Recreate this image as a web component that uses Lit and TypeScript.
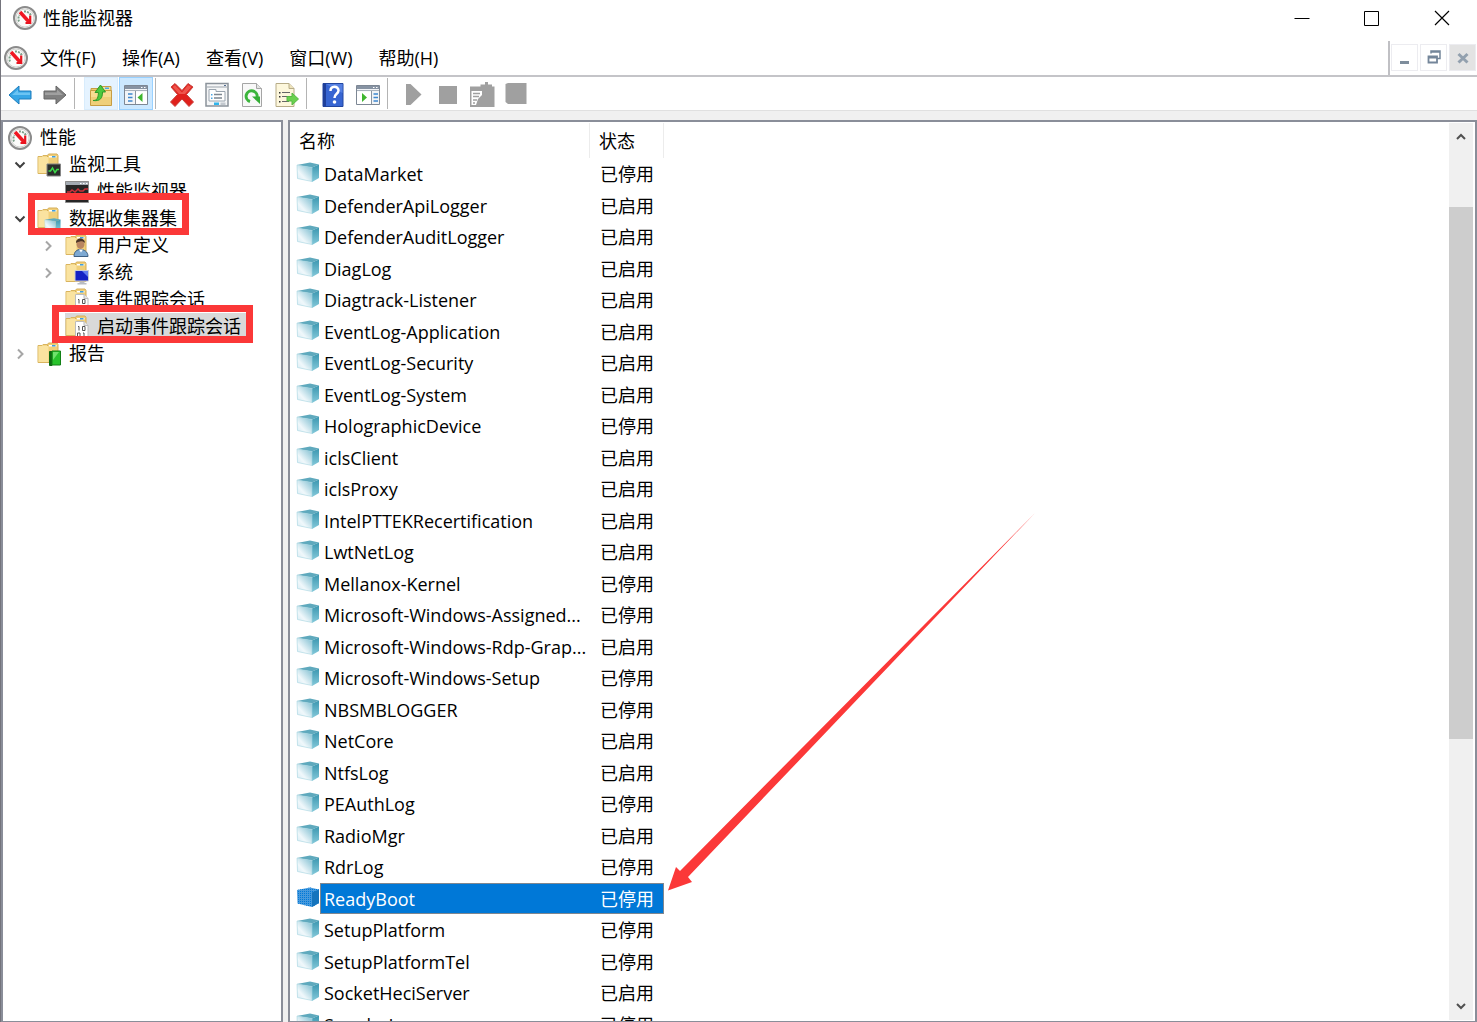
import { LitElement, html, svg, css } from "lit";
import { customElement, property, state } from "lit/decorators.js";
import { classMap } from "lit/directives/class-map.js";

const folder = svg`
  <path d="M1 3.500h4l1-1h4l1 1v17H1z" fill="#f3d889" stroke="#d9b45f"/>
  <path d="M10.500 2.500l1-1.500h8.500l1 1.500v18h-10.500z" fill="#f0cf79" stroke="#d5ae58"/>
  <path d="M1.500 4h10v16h-10z" fill="#fae3a0"/>
  <path d="M12 3h7.500v1.500H12z" fill="#fff"/>
  <path d="M15 3h3.500v1.500H15z" fill="#3f9fe0"/>`;

const gauge = svg`
  <circle cx="12" cy="12" r="11" fill="#f4f4f2" stroke="#8b8b8b" stroke-width="2"/>
  <circle cx="12" cy="12" r="9" fill="#fbfbfa" stroke="#d2d2d0"/>
  <path d="M6 15.500a7 7 0 0 1 .5-6.500M11 5.500a7 7 0 0 1 7 4" fill="none" stroke="#7da08a" stroke-width="2" stroke-dasharray="2 1"/>
  <path d="M7 6l9.500 10.500" stroke="#f01822" stroke-width="3.500"/>
  <path d="M17.200 9.500v7.500H12.500" fill="none" stroke="#e8141f" stroke-width="2.200"/>`;

const cubeShape = svg`
  <path d="M1 3L14 .500 23 2.500 16 5.500z" fill="#5fa9bd"/>
  <path d="M16 5.500l7-3V16l-7 4z" fill="url(#side)"/>
  <path d="M1 3l15 2.500v14L1.500 16.500z" fill="url(#face)" stroke="#a3d3df" stroke-width=".600"/>`;

const cubeDefs = svg`<defs>
  <linearGradient id="face" x1="0" y1="1" x2="1" y2="0"><stop offset="0" stop-color="#d5ebf4"/><stop offset=".35" stop-color="#f0f8fb"/><stop offset="1" stop-color="#7dbdd0"/></linearGradient>
  <linearGradient id="side" x1="0" y1="0" x2="0" y2="1"><stop offset="0" stop-color="#3c97b0"/><stop offset="1" stop-color="#84c9da"/></linearGradient>
</defs>`;

const binaryPage = svg`
  <path d="M10.500 6.500h8.500l4 4v13H10.500z" fill="#fff" stroke="#bcbcbc"/>
  <path d="M19 6.500v4h4" fill="#e6e6e6" stroke="#bcbcbc"/>
  <path d="M13 11.500h1v4M17.500 11.500h2.500v4h-2.500zM12.500 18h2.500v4h-2.500zM18 18h1v4.500" fill="none" stroke="#555"/>`;

const windowFrame = svg`
  <path d="M.500 2.500h23v19H.500z" fill="#f2f4f7" stroke="#7d8794"/>
  <path d="M1 3h22v3H1z" fill="#8793a3"/>
  <path d="M1 7.500h22" stroke="#a9b2bd"/>
  <path d="M17 4h1.500v1H17zM20 4h1.500v1H20z" fill="#fff"/>`;

const ICONS: Record<string, unknown> = {
  gauge,
  cube: svg`${cubeDefs}${cubeShape}`,
  cubeSelected: svg`
    <defs><pattern id="dots" width="2" height="2" patternUnits="userSpaceOnUse"><path d="M0 0h1v1H0z" fill="#0078d7"/></pattern></defs>
    <path d="M1 3L14 .500 23 2.500V16l-7 4L1.500 16.500z" fill="#4699dc"/>
    <path d="M1 3L14 .500 23 2.500V16l-7 4L1.500 16.500z" fill="url(#dots)"/>
    <path d="M16 5.500l7-3V16l-7 4z" fill="#1474bd"/>`,
  monitorTools: svg`${folder}
    <path d="M10 11h13.500v12H10z" fill="#2b2f2c" stroke="#858585"/>
    <path d="M11.500 18h2l2-3 2.500 4.500 2-3h2" fill="none" stroke="#3cdc4a" stroke-width="1.500"/>`,
  monitor: svg`
    <path d="M.500 1.500h23v21H.500z" fill="#262626" stroke="#8e8e8e"/>
    <path d="M1 2h22v3H1z" fill="#a3aab2"/>
    <path d="M15 3h1.500v1H15zM18 3h1.500v1H18zM21 3h1.500v1H21z" fill="#fff"/>
    <path d="M2 12h3l2-2 3 2 3-3 2 2h3l2-2h3" fill="none" stroke="#d0303a" stroke-width="1.500"/>`,
  collector: svg`${folder}${cubeDefs}<g transform="translate(7 11) scale(.72 .62)">${cubeShape}</g>`,
  user: svg`${folder}
    <path d="M9 22.500c0-5 3-7 6.500-7s7.500 2 7.500 7z" fill="#7ea9d2" stroke="#3d5f83"/>
    <path d="M14 15.500l2 3 2-3z" fill="#fff"/>
    <ellipse cx="15.500" cy="10" rx="4" ry="5" fill="#b98661"/>
    <path d="M11 9c-.5-6 9-6 9 0-1.500-2-4-2-5-1.500S12 8 11 9z" fill="#4b3527"/>`,
  system: svg`${folder}
    <path d="M10 9.500h13.500v10.500H10z" fill="#1320c4" stroke="#c9ccd3"/>
    <path d="M17 10l6 0v6z" fill="#5f7bf0"/>
    <path d="M14.500 20.500h5v1.500h2v1.500h-9v-1.500h2z" fill="#b9bcc3"/>`,
  trace: svg`${folder}${binaryPage}`,
  report: svg`${folder}
    <path d="M12.500 9.500h2.500v14h-2.500z" fill="#0d6b12" stroke="#0d6b12"/>
    <path d="M15 9h8.500v14H15z" fill="#28c32c" stroke="#128016"/>
    <path d="M16 10h6l-6 8z" fill="#6fe26c"/>`,
  back: svg`<path d="M1 12l10-9v5h12v8H11v5z" fill="#37a6e6" stroke="#1c7dbd"/><path d="M4 12l6-5.500V9.500h12V12z" fill="#6cc4f3"/>`,
  forward: svg`<path d="M23 12L13 3v5H1v8h12v5z" fill="#808080" stroke="#666"/><path d="M20 12l-6-5.500V9.500H2V12z" fill="#a0a0a0"/>`,
  up: svg`
    <path d="M2 5.500h10v3H2z" fill="#eccb70" stroke="#c79d43"/>
    <path d="M11 3.500h11v5H11z" fill="#f6e2a4" stroke="#c79d43"/><path d="M16 4.500h4v1.500h-4z" fill="#4ba8e5"/>
    <path d="M1.500 7.500h21v15h-21z" fill="#efcf7a" stroke="#c79d43"/><path d="M2 8h20v6H2z" fill="#f6dc92"/>
    <path d="M4 17.500c5 0 5-3.500 5.500-8H6L11.500 2l5 7H13.500c0 6-2 9.500-9.500 8.500z" fill="#4cc83e" stroke="#2f9a29"/>`,
  panelLeft: svg`${windowFrame}
    <path d="M11.500 8v13" stroke="#8a94a0"/><path d="M12 8.500h11v12.500H12z" fill="#fff"/>
    <path d="M4 11h4.500M4 14.500h4.500M4 18h4.500" stroke="#3e87cf" stroke-width="1.500"/>
    <path d="M18.500 10v9L13.500 14.500z" fill="#3fb62f"/>`,
  panelRight: svg`${windowFrame}
    <path d="M1 8.500h14v12.500H1z" fill="#fff"/><path d="M15.500 8v13" stroke="#8a94a0"/>
    <path d="M17.500 11h4.500M17.500 14.500h4.500M17.500 18h4.500" stroke="#3e87cf" stroke-width="1.500"/>
    <path d="M6 10v9l5-4.500z" fill="#3fb62f"/>`,
  remove: svg`<path d="M1 4l4-3.500 7 7 6-7L23 4l-6.500 7.500 7 7.500-4.500 4.500-7-7.500-7 7.500L.500 19l7-7.500z" fill="#e0201c" stroke="#c9413c"/><path d="M2.500 4L5 2l7 7.500L18 2l3.500 2-6.500 7H9z" fill="#ee544b"/>`,
  properties: svg`
    <path d="M1 .500h22v22.500H1z" fill="#f5f6f7" stroke="#8b929a" stroke-width="1.500"/><path d="M2 4h20" stroke="#9ba3ab"/>
    <path d="M19 2h2v1h-2z" fill="#526d91"/>
    <path d="M4 6.500h7v2h9v9.500H4z" fill="#fff" stroke="#9aa4ae"/>
    <path d="M9 11.500h8M9 15h8" stroke="#7e8790" stroke-width="1.500"/><path d="M6 11h1.500v1.500H6zM6 14.500h1.500V16H6z" fill="#4ba8e5"/>
    <path d="M9 19.500h5V22H9z" fill="#30b5ec"/><path d="M15.500 19.500h5V22h-5z" fill="#c3c9cf"/>`,
  refresh: svg`
    <path d="M2.500.500h14l5 5v18h-19z" fill="#f8f8f8" stroke="#a5a5a5"/><path d="M16.500.500v5h5" fill="#e4e4e4" stroke="#a5a5a5"/>
    <path d="M10 18.500a5.500 5.500 0 1 1 7-4" fill="none" stroke="#3cb53c" stroke-width="3"/><path d="M12 13.500h8v7.500z" fill="#34ad35"/>`,
  exportList: svg`
    <path d="M1 .500h13l5 5v18H1z" fill="#fdf7dc" stroke="#b7ac88"/><path d="M14 .500v5h5" fill="#eee3bb" stroke="#b7ac88"/>
    <path d="M7 9.500h8M7 13.500h6M7 18.500h7" stroke="#666"/><path d="M4 9h1.500v1.500H4zM4 13h1.500v1.500H4zM4 18h1.500v1.500H4z" fill="#333"/>
    <path d="M12 13.500h5V10l6.500 6-6.500 6v-4h-5z" fill="#6ad14f" stroke="#57b945"/>`,
  help: svg`
    <path d="M2 .500h20v23H2z" fill="#3765d2" stroke="#2246a0"/><path d="M2 .500h3v23H2z" fill="#1f3f9a"/><path d="M5 1h16.500v9z" fill="#5580e2"/>
    <path d="M9.500 8c0-5.500 8-5.500 8-.5 0 3.500-4 3-4 7.500" fill="none" stroke="#fff" stroke-width="2.500"/><circle cx="13.500" cy="19" r="1.800" fill="#fff"/>`,
  start: svg`<path d="M4 1h4.500L19.500 11.500 8.500 22H4z" fill="#a0a0a0"/>`,
  stop: svg`<path d="M3 3h18v18H3z" fill="#a0a0a0"/>`,
  template: svg`<path d="M0 3.500h10.500V1.500H15V-1h3v2.500h4v2h2.500V24H0z" fill="#a0a0a0"/>
    <path d="M1.500 8h10.500v4l-4 4-2 6H1.500z" fill="#fff"/><path d="M3 10.500h7M3 13.500h6M3 17h4M3 20h2" stroke="#a0a0a0" stroke-width="1.500"/>`,
  save: svg`<path d="M1.500 1L4 0h18.500v21H4L1.500 19z" fill="#a0a0a0"/>`,
  minimize: svg`<path d="M4.500 12.500h15" stroke="#000"/>`,
  maximize: svg`<path d="M4.500 5.500h14v14h-14z" fill="none" stroke="#000"/>`,
  close: svg`<path d="M5 5l14 14M19 5L5 19" stroke="#000" stroke-width="1.200"/>`,
  mdiMinimize: svg`<path d="M7 15h9v3H7z" fill="#7e8d9c"/>`,
  mdiRestore: svg`<path d="M9 7.500V5h9v7.500h-3M9 6h9" fill="none" stroke="#74869a" stroke-width="1.500"/><path d="M6.500 10.500h8.500v6H6.500zM6.500 11.500h8" fill="none" stroke="#74869a" stroke-width="1.800"/>`,
  mdiClose: svg`<path d="M7.500 8l9 8.500M16.500 8l-9 8.500" stroke="#92a0ae" stroke-width="3"/>`,
  down: svg`<path d="M7.500 9.500L12 14l4.500-4.500" fill="none" stroke="#404040" stroke-width="2"/>`,
  right: svg`<path d="M10 7.500L14.500 12l-4.500 4.500" fill="none" stroke="#a6a6a6" stroke-width="2"/>`,
  scrollUp: svg`<path d="M8 14l4-4 4 4" fill="none" stroke="#505050" stroke-width="2"/>`,
  scrollDown: svg`<path d="M8 10l4 4 4-4" fill="none" stroke="#505050" stroke-width="2"/>`,
};

@customElement("mmc-icon")
class MmcIcon extends LitElement {
  @property() name = "";
  static styles = css`
    :host { display: block; flex: none; width: 24px; height: 24px; }
    .glyph { display: block; width: 100%; height: 100%; overflow: visible; }
  `;
  render() {
    return html`<svg class="glyph" viewBox="0 0 24 24" aria-hidden="true">${ICONS[this.name]}</svg>`;
  }
}

interface TreeNode {
  label: string;
  icon: string;
  level: number;
  arrow?: "down" | "right";
  mark?: boolean;
}

const TREE: TreeNode[] = [
  { label: "性能", icon: "gauge", level: 0 },
  { label: "监视工具", icon: "monitorTools", level: 1, arrow: "down" },
  { label: "性能监视器", icon: "monitor", level: 2 },
  { label: "数据收集器集", icon: "collector", level: 1, arrow: "down", mark: true },
  { label: "用户定义", icon: "user", level: 2, arrow: "right" },
  { label: "系统", icon: "system", level: 2, arrow: "right" },
  { label: "事件跟踪会话", icon: "trace", level: 2 },
  { label: "启动事件跟踪会话", icon: "trace", level: 2, mark: true },
  { label: "报告", icon: "report", level: 1, arrow: "right" },
];

const ON = "已启用";
const OFF = "已停用";
const SESSIONS: [string, string][] = [
  ["DataMarket", OFF],
  ["DefenderApiLogger", ON],
  ["DefenderAuditLogger", ON],
  ["DiagLog", ON],
  ["Diagtrack-Listener", ON],
  ["EventLog-Application", ON],
  ["EventLog-Security", ON],
  ["EventLog-System", ON],
  ["HolographicDevice", OFF],
  ["iclsClient", ON],
  ["iclsProxy", ON],
  ["IntelPTTEKRecertification", ON],
  ["LwtNetLog", ON],
  ["Mellanox-Kernel", OFF],
  ["Microsoft-Windows-Assigned...", OFF],
  ["Microsoft-Windows-Rdp-Grap...", ON],
  ["Microsoft-Windows-Setup", OFF],
  ["NBSMBLOGGER", OFF],
  ["NetCore", ON],
  ["NtfsLog", ON],
  ["PEAuthLog", OFF],
  ["RadioMgr", ON],
  ["RdrLog", OFF],
  ["ReadyBoot", OFF],
  ["SetupPlatform", OFF],
  ["SetupPlatformTel", OFF],
  ["SocketHeciServer", ON],
  ["SpoolerLogger", OFF],
];

const TOOLS: [string, string][][] = [
  [["back", "后退"], ["forward", "前进"]],
  [["up", "向上一级"], ["panelLeft", "显示/隐藏控制台树"]],
  [["remove", "删除"], ["properties", "属性"], ["refresh", "刷新"], ["exportList", "导出列表"]],
  [["help", "帮助"], ["panelRight", "显示/隐藏操作窗格"]],
  [["start", "启动"], ["stop", "停止"], ["template", "保存模板"], ["save", "保存"]],
];

@customElement("app-root")
class AppRoot extends LitElement {
  @state() private session = "ReadyBoot";
  @state() private node = "启动事件跟踪会话";

  static styles = css`
    :host {
      display: flex;
      flex-direction: column;
      box-sizing: border-box;
      height: 100vh;
      overflow: hidden;
      border-left: 1px solid #74747c;
      background: #fff;
      color: #000;
      font: 18px/26px "Open Sans", "Noto Sans CJK SC", sans-serif;
    }
    button {
      display: flex;
      align-items: center;
      justify-content: center;
      margin: 0;
      padding: 0;
      border: 0;
      background: none;
      color: inherit;
      font: inherit;
      white-space: nowrap;
    }
    .title-bar { display: flex; align-items: center; height: 36px; padding: 0 0 5px 12px; }
    .title { flex: 1; margin: 0 0 0 6px; font: inherit; }
    .window-button { width: 70px; height: 36px; }
    .menu-bar { display: flex; align-items: center; height: 34px; padding-left: 3px; border-bottom: 2px solid #c4c4c8; }
    .menus { display: flex; flex: 1; gap: 26px; margin-left: 12px; }
    .mdi { display: flex; align-self: stretch; gap: 2px; padding: 3px 1px 4px 1px; border-left: 2px solid #c0c0c4; }
    .mdi-button { box-sizing: border-box; width: 27px; border: 1px solid #ececf0; }
    .mdi-button.off { background: #e3e3e3; }
    .toolbar { display: flex; align-items: center; height: 33px; padding-left: 2px; gap: 1px; border-bottom: 1px solid #e0e0e0; }
    .group { display: flex; gap: 1px; }
    .group.last { gap: 0; }
    .tool { box-sizing: border-box; width: 34px; height: 33px; padding-top: 2px; border: 1px solid transparent; }
    .tool.hot { background: #e5f3ff; border-color: #d8ecfc; }
    .tool.pressed { background: #cce8ff; border-color: #99d1ff; }
    .separator { width: 1px; height: 31px; margin: 0 8px 0 1px; background: #b4b4b4; }
    .workspace { display: flex; flex: 1; min-height: 0; gap: 5px; padding-top: 9px; background: #f0f0f0; }
    .pane { box-sizing: border-box; border: 2px solid #8a8e99; border-bottom-width: 1px; background: #fff; overflow: hidden; }
    .tree { width: 282px; padding-top: 2px; }
    .nodes { list-style: none; margin: 0; padding: 0; }
    .item { position: relative; height: 27px; }
    .node { height: 27px; line-height: 27px; padding-left: 5px; gap: 5px; }
    .node.level-2 { padding-left: 33px; }
    .label { padding-right: 5px; }
    .face { display: flex; align-items: center; gap: 8px; }
    .face.selected { background: #d9d9d9; }
    .mark { position: absolute; z-index: 1; box-sizing: border-box; border: 7px solid #fb3838; pointer-events: none; }
    .mark.level-1 { left: 25px; top: -12px; width: 161px; height: 42px; }
    .mark.level-2 { left: 49px; top: -8px; width: 201px; height: 38px; }
    .list { position: relative; display: flex; flex: 1; }
    .content { flex: 1; overflow: hidden; padding-top: 1px; }
    .sessions { border-collapse: separate; border-spacing: 0; table-layout: fixed; width: 374px; }
    .col-icon { width: 30px; }
    .col-name { width: 270px; }
    .col-state { width: 74px; }
    th { box-sizing: border-box; height: 35px; padding: 0 0 0 9px; border-right: 1px solid #ececec; font-weight: 400; text-align: left; }
    td { box-sizing: border-box; height: 31px; padding: 0; white-space: nowrap; }
    tr:nth-child(odd) > td { height: 32px; }
    .icon-cell { padding-left: 6px; }
    .name-cell { padding-left: 4px; }
    .state-cell { padding-left: 10px; }
    .selected > .name-cell, .selected > .state-cell { background: #0078d7; color: #fff; border: 1px solid #7f8790; }
    .selected > .name-cell { border-right: 0; padding-left: 3px; }
    .selected > .state-cell { border-left: 0; }
    .scrollbar { display: flex; flex-direction: column; width: 24px; margin: 1px 2px 1px 0; background: #f0f0f0; }
    .scroll-button { width: 24px; height: 27px; }
    .before { flex: 57; }
    .thumb { flex: 531; background: #cdcdcd; }
    .after { flex: 254; }
    .pointer { position: absolute; left: 378px; top: 390px; width: 368px; height: 380px; pointer-events: none; }
  `;

  private windowButton(icon: string, label: string) {
    return html`<button class="window-button" aria-label=${label}><mmc-icon name=${icon}></mmc-icon></button>`;
  }

  private treeNode(n: TreeNode) {
    const face = { face: true, selected: n.label === this.node };
    return html`<li class="item">
      <button class="node level-${n.level}" @click=${() => (this.node = n.label)}>
        ${n.level ? html`<mmc-icon name=${n.arrow ?? ""}></mmc-icon>` : ""}
        <span class=${classMap(face)}><mmc-icon name=${n.icon}></mmc-icon><span class="label">${n.label}</span></span>
      </button>
      ${n.mark ? html`<span class="mark level-${n.level}"></span>` : ""}
    </li>`;
  }

  private sessionRow([name, status]: [string, string]) {
    const selected = name === this.session;
    return html`<tr class=${classMap({ selected })} @click=${() => (this.session = name)}>
      <td class="icon-cell"><mmc-icon name=${selected ? "cubeSelected" : "cube"}></mmc-icon></td>
      <td class="name-cell">${name}</td>
      <td class="state-cell">${status}</td>
    </tr>`;
  }

  render() {
    return html`
      <header class="title-bar">
        <mmc-icon name="gauge"></mmc-icon>
        <h1 class="title">性能监视器</h1>
        ${this.windowButton("minimize", "最小化")}${this.windowButton("maximize", "最大化")}${this.windowButton("close", "关闭")}
      </header>
      <nav class="menu-bar">
        <mmc-icon name="gauge"></mmc-icon>
        <div class="menus">
          ${["文件(F)", "操作(A)", "查看(V)", "窗口(W)", "帮助(H)"].map((m) => html`<button>${m}</button>`)}
        </div>
        <div class="mdi">
          <button class="mdi-button" aria-label="最小化子窗口"><mmc-icon name="mdiMinimize"></mmc-icon></button>
          <button class="mdi-button" aria-label="还原子窗口"><mmc-icon name="mdiRestore"></mmc-icon></button>
          <button class="mdi-button off" aria-label="关闭子窗口" disabled><mmc-icon name="mdiClose"></mmc-icon></button>
        </div>
      </nav>
      <div class="toolbar" role="toolbar">
        ${TOOLS.map((group, i) => html`
          ${i ? html`<span class="separator"></span>` : ""}
          <div class=${classMap({ group: true, last: i === TOOLS.length - 1 })}>
            ${group.map(([icon, label]) => html`<button
              class=${classMap({ tool: true, hot: icon === "up", pressed: icon === "panelLeft" })}
              aria-label=${label}><mmc-icon name=${icon}></mmc-icon></button>`)}
          </div>`)}
      </div>
      <main class="workspace">
        <aside class="pane tree"><ul class="nodes">${TREE.map((n) => this.treeNode(n))}</ul></aside>
        <section class="pane list">
          <div class="content">
            <table class="sessions">
              <colgroup><col class="col-icon" /><col class="col-name" /><col class="col-state" /></colgroup>
              <thead><tr><th colspan="2">名称</th><th>状态</th></tr></thead>
              <tbody>${SESSIONS.map((s) => this.sessionRow(s))}</tbody>
            </table>
          </div>
          <div class="scrollbar">
            <button class="scroll-button" aria-label="向上滚动"><mmc-icon name="scrollUp"></mmc-icon></button>
            <div class="before"></div><div class="thumb"></div><div class="after"></div>
            <button class="scroll-button" aria-label="向下滚动"><mmc-icon name="scrollDown"></mmc-icon></button>
          </div>
          <svg class="pointer" viewBox="0 0 368 380" aria-hidden="true">
            <path d="M367 1L20 365l4 5L0 378.500 8 355l4 4z" fill="#fb3838"/>
          </svg>
        </section>
      </main>
    `;
  }
}
